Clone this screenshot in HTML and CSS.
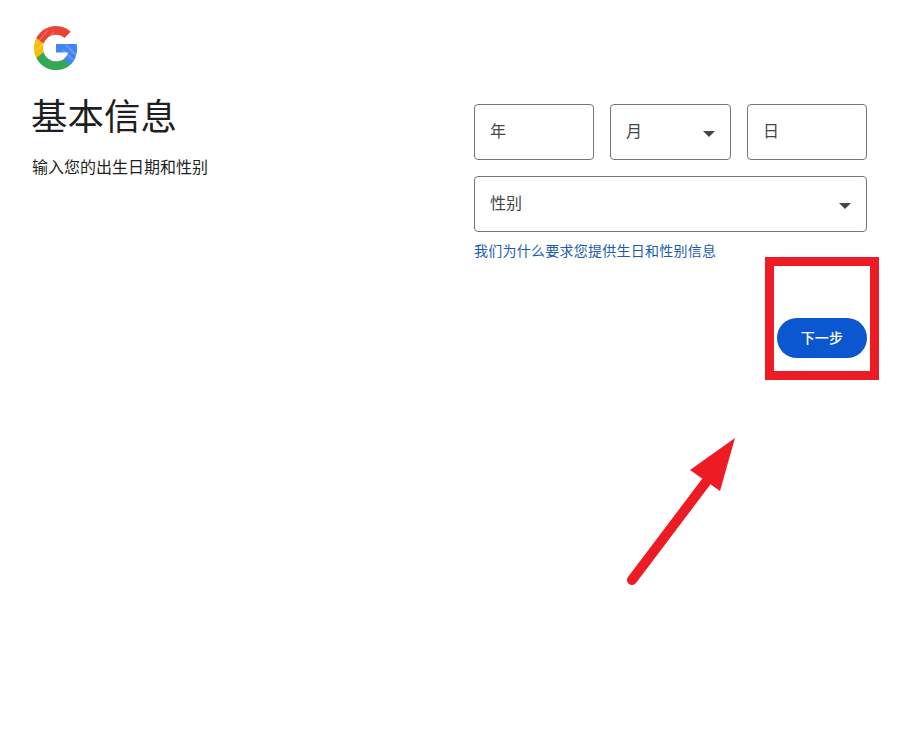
FILE: index.html
```html
<!DOCTYPE html>
<html lang="zh-CN">
<head>
<meta charset="utf-8">
<title>基本信息</title>
<link rel="stylesheet" href="styles.css">
</head>
<body>
<div class="page">
  <svg class="logo" viewBox="0 0 48 48" width="48" height="48" aria-label="Google">
    <path fill="#4285F4" d="M45.12 24.5c0-1.56-.14-3.06-.4-4.5H24v8.51h11.84c-.51 2.75-2.06 5.08-4.39 6.64v5.52h7.11c4.16-3.83 6.56-9.47 6.56-16.17z"/>
    <path fill="#34A853" d="M24 46c5.94 0 10.92-1.97 14.56-5.33l-7.11-5.52c-1.97 1.32-4.49 2.1-7.45 2.1-5.73 0-10.58-3.87-12.31-9.07H4.34v5.7C7.96 41.07 15.4 46 24 46z"/>
    <path fill="#FBBC05" d="M11.69 28.18C11.25 26.86 11 25.45 11 24s.25-2.86.69-4.18v-5.7H4.34C2.85 17.09 2 20.45 2 24c0 3.55.85 6.91 2.34 9.88l7.35-5.7z"/>
    <path fill="#EA4335" d="M24 10.75c3.23 0 6.13 1.11 8.41 3.29l6.31-6.31C34.91 4.18 29.93 2 24 2 15.4 2 7.96 6.93 4.34 14.12l7.35 5.7c1.73-5.2 6.58-9.07 12.31-9.07z"/>
    <path class="logo-sheen" d="M4 20 16 6M4 27 22 8M34 21 44 31M31 26 41 36"/>
  </svg>
  <main class="content">
    <section class="intro">
      <h1 class="title">基本信息</h1>
      <p class="subtitle">输入您的出生日期和性别</p>
    </section>
    <section class="form">
      <div class="date-row">
        <div class="field">年</div>
        <div class="field field-select">月<span class="caret"></span></div>
        <div class="field">日</div>
      </div>
      <div class="field field-select">性别<span class="caret"></span></div>
      <a class="help" href="#">我们为什么要求您提供生日和性别信息</a>
      <div class="actions"><button class="next" type="button">下一步</button></div>
    </section>
  </main>
</div>
<div class="highlight"></div>
<svg class="arrow" viewBox="0 0 899 736" width="899" height="736" aria-hidden="true">
  <line x1="632" y1="580" x2="706" y2="482" stroke="#ed1c24" stroke-width="10" stroke-linecap="round"/>
  <polygon points="735,438 720,491 690,470" fill="#ed1c24"/>
</svg>
</body>
</html>
```
FILE: styles.css
```css
html, body {
  margin: 0;
  padding: 0;
  background: #fff;
}
body {
  font-family: "Noto Sans CJK SC", "Liberation Sans", sans-serif;
  color: #1f1f1f;
  height: 736px;
  overflow: hidden;
}
.page {
  padding: 24px 32px 0;
}
.logo {
  display: block;
  margin-bottom: 23px;
}
.logo-sheen {
  fill: none;
  stroke: #fff;
  stroke-width: 1.6;
  opacity: 0.22;
}
.content {
  display: flex;
  justify-content: space-between;
}
.intro {
  flex: 1;
}
.title {
  margin: -2px 0 0 -1px;
  font-size: 36.5px;
  font-weight: 400;
  line-height: 44px;
}
.subtitle {
  margin: 17px 0 0;
  font-size: 16px;
  line-height: 24px;
  font-weight: 400;
}
.form {
  width: 393px;
  padding-top: 9px;
  display: flex;
  flex-direction: column;
  gap: 16px;
}
.date-row {
  display: grid;
  grid-template-columns: 120px 121px 120px;
  gap: 16px;
}
.field {
  box-sizing: border-box;
  height: 56px;
  border: 1px solid #747775;
  border-radius: 4px;
  padding: 0 15px 4px;
  display: flex;
  align-items: center;
  justify-content: space-between;
  font-size: 16px;
  color: #444746;
}
.caret {
  width: 0;
  height: 0;
  border-left: 6px solid transparent;
  border-right: 6px solid transparent;
  border-top: 6px solid #444746;
  margin-top: 8px;
}
.help {
  margin-top: -8px;
  font-size: 14px;
  line-height: 20px;
  letter-spacing: 0.25px;
  color: #1a5cb0;
  text-decoration: none;
}
.actions {
  display: flex;
  justify-content: flex-end;
  margin-top: 42px;
}
.next {
  width: 90px;
  height: 40px;
  border: 0;
  border-radius: 20px;
  background: #0b57d0;
  color: #fff;
  font-family: inherit;
  font-size: 14px;
  font-weight: 500;
  letter-spacing: 0.25px;
  padding: 0 0 2px;
}
.highlight {
  position: absolute;
  left: 765px;
  top: 257px;
  width: 114px;
  height: 123px;
  box-sizing: border-box;
  border: 9px solid #ed1c24;
}
.arrow {
  position: absolute;
  left: 0;
  top: 0;
  pointer-events: none;
}
```
